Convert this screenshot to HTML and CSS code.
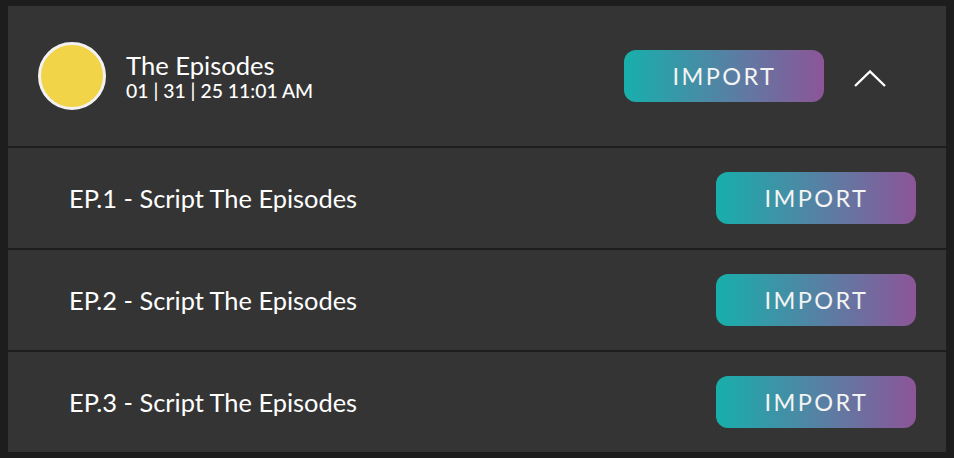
FILE: index.html
```html
<!DOCTYPE html>
<html>
<head>
<meta charset="utf-8">
<link rel="stylesheet" href="styles.css">
</head>
<body>
<div class="card">
  <div class="header">
    <div class="avatar"></div>
    <div class="info">
      <div class="title">The Episodes</div>
      <div class="date">01 | 31 | 25 11:01 AM</div>
    </div>
    <button class="import">IMPORT</button>
    <svg class="chevron" width="32" height="17" viewBox="0 0 32 17"><path d="M1 16 L16 1.5 L31 16" fill="none" stroke="#fff" stroke-width="2.4"/></svg>
  </div>
  <div class="row">
    <div class="name">EP.1 - Script The Episodes</div>
    <button class="import">IMPORT</button>
  </div>
  <div class="row">
    <div class="name">EP.2 - Script The Episodes</div>
    <button class="import">IMPORT</button>
  </div>
  <div class="row">
    <div class="name">EP.3 - Script The Episodes</div>
    <button class="import">IMPORT</button>
  </div>
</div>
</body>
</html>
```
FILE: styles.css
```css
html, body {
  margin: 0;
  padding: 0;
  background: #1d1d1d;
}
body {
  padding: 6px 8px;
  font-family: Lato, "Open Sans", sans-serif;
  color: #fff;
}
.card {
  width: 938px;
  display: flex;
  flex-direction: column;
  gap: 2px;
  background: #1d1d1d;
}
.header {
  height: 140px;
  background: #343434;
  display: flex;
  align-items: center;
  padding-left: 30px;
  box-sizing: border-box;
}
.avatar {
  width: 62px;
  height: 62px;
  border: 3px solid #f2f2f2;
  border-radius: 50%;
  background: #f1d447;
}
.info {
  margin-left: 20px;
  flex: 1;
  display: flex;
  flex-direction: column;
}
.title {
  font-size: 25.6px;
  line-height: 28px;
}
.date {
  font-size: 19.4px;
  font-weight: 500;
  line-height: 23px;
}
.import {
  width: 200px;
  height: 52px;
  border: none;
  border-radius: 12px;
  background: linear-gradient(90deg, #17afab 0%, #5a7ea3 55%, #8c5598 100%);
  color: #f4f4f4;
  font-family: Lato, sans-serif;
  font-size: 23.5px;
  letter-spacing: 2.4px;
  padding: 0 0 0 1px;
}
.chevron {
  margin-left: 30px;
  margin-right: 60px;
  margin-top: 5px;
}
.row {
  height: 100px;
  background: #343434;
  display: flex;
  align-items: center;
  justify-content: space-between;
  padding: 0 30px 0 61px;
}
.name {
  font-size: 25.4px;
}
```
